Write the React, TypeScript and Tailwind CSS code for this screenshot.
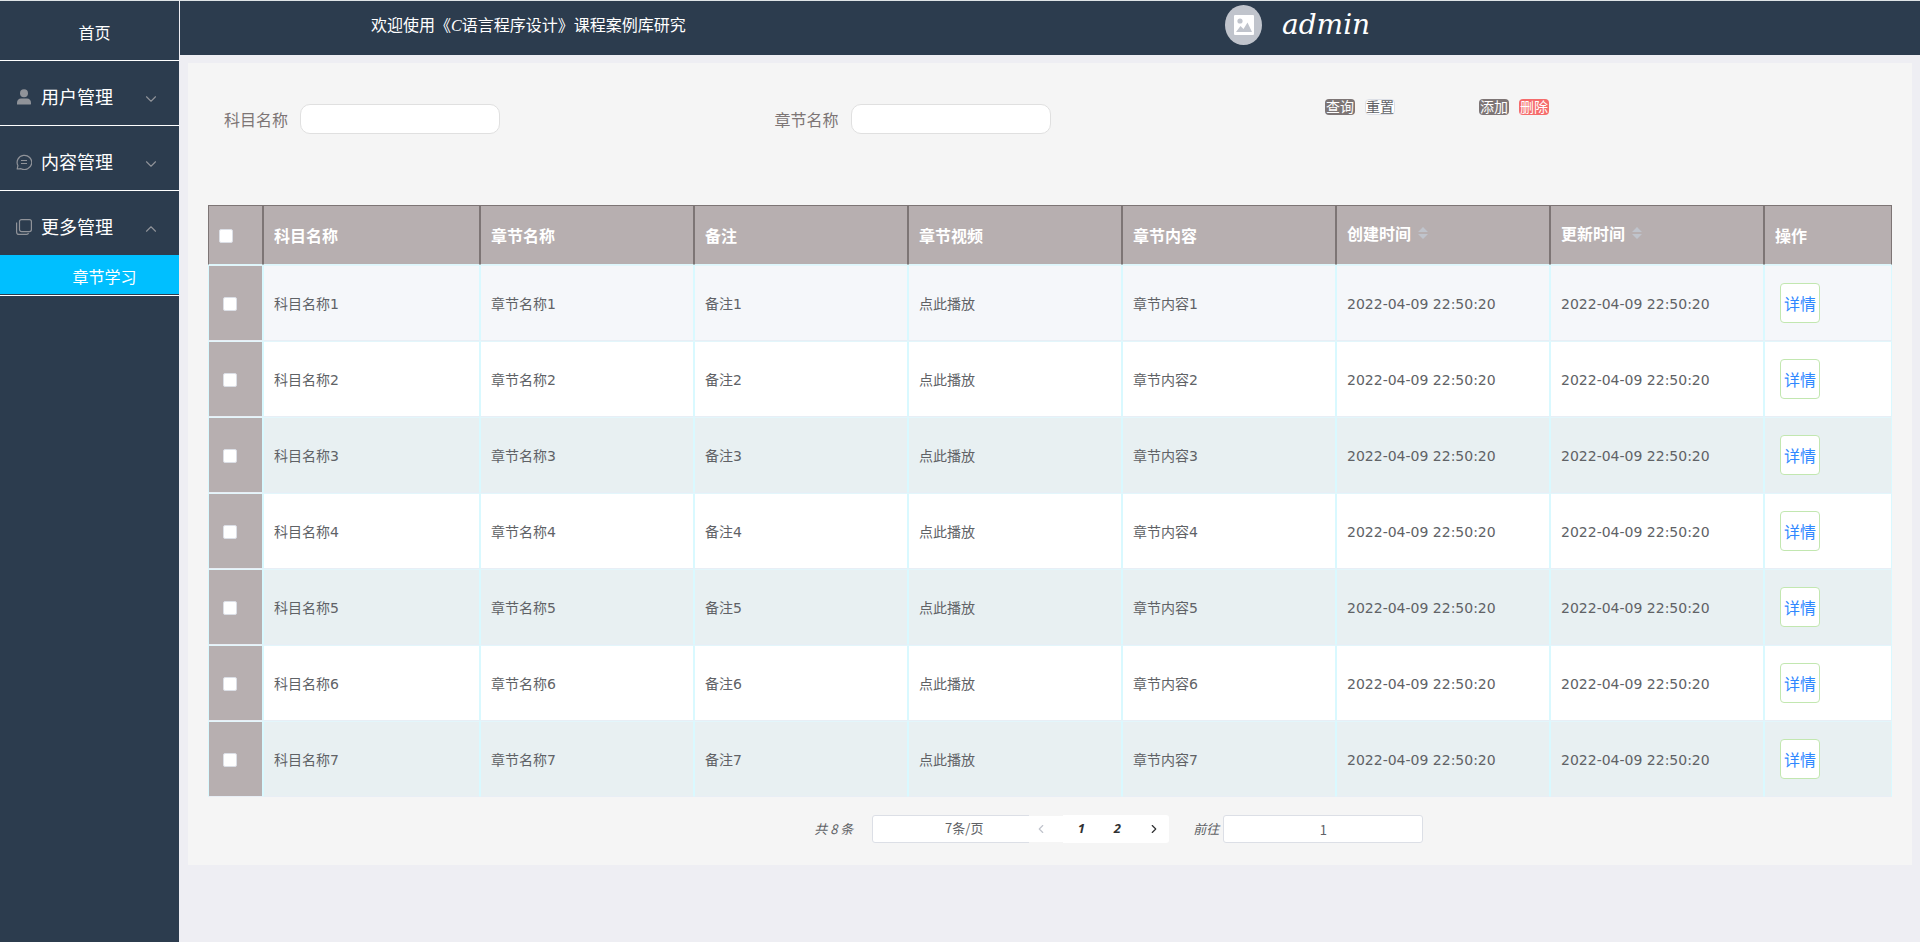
import { useState } from 'react';
import { ChevronDown, ChevronLeft, ChevronRight, ChevronUp } from 'lucide-react';

interface Chapter {
  id: number;
  subject: string;
  name: string;
  remark: string;
  content: string;
  createdAt: string;
  updatedAt: string;
}

const chapters: Chapter[] = [1, 2, 3, 4, 5, 6, 7].map((n) => ({
  id: n,
  subject: `科目名称${n}`,
  name: `章节名称${n}`,
  remark: `备注${n}`,
  content: `章节内容${n}`,
  createdAt: '2022-04-09 22:50:20',
  updatedAt: '2022-04-09 22:50:20',
}));

const columns = [
  { title: '科目名称' },
  { title: '章节名称' },
  { title: '备注' },
  { title: '章节视频' },
  { title: '章节内容' },
  { title: '创建时间', sortable: true },
  { title: '更新时间', sortable: true },
  { title: '操作' },
];

const UserIcon = () => (
  <svg viewBox="0 0 16 16" className="h-4 w-4 shrink-0" fill="#909399">
    <circle cx="8" cy="4.2" r="4" />
    <path d="M1 15.5v-1.800C1 11.300 2.600 9.600 5 9.600h6c2.400 0 4 1.700 4 4.100v1.300c0 .300-.200.500-.500.500z" />
  </svg>
);

const ChatIcon = () => (
  <svg viewBox="0 0 16 16" className="h-4 w-4 shrink-0" fill="none" stroke="#909399" strokeWidth="1.2">
    <path d="M1.200 15l.700-3.400A7.300 7.100 0 1 1 5 14.700z" strokeLinejoin="round" />
    <path d="M5 6.500h6M5 9.500h6" />
  </svg>
);

const CopyIcon = () => (
  <svg viewBox="0 0 16 16" className="h-4 w-4 shrink-0" fill="none" stroke="#909399" strokeWidth="1.2">
    <rect x="3.500" y="0.600" width="11.900" height="12" rx="2" />
    <path d="M.600 3.500v9.400a2.500 2.500 0 0 0 2.500 2.500h7.400a2 2 0 0 0 2-1.500" />
  </svg>
);

const PictureIcon = () => (
  <svg viewBox="0 0 20 20" className="h-5 w-5">
    <rect width="20" height="20" rx="1" fill="#fff" />
    <circle cx="6" cy="6" r="2.600" fill="#c0c4cc" />
    <path d="M2 17l4.500-6 3 3 4-6.500L18 17z" fill="#c0c4cc" />
  </svg>
);

const menus = [
  { title: '用户管理', icon: <UserIcon />, open: false },
  { title: '内容管理', icon: <ChatIcon />, open: false },
  { title: '更多管理', icon: <CopyIcon />, open: true },
];

function Sidebar() {
  return (
    <nav className="flex w-[180px] shrink-0 flex-col border-t border-r border-[#dfe4e6] border-r-[#eeeef3] bg-[#2c3c4e] text-white">
      <a href="#home" className="flex h-[60px] items-center justify-center border-b border-white pt-[2px] pl-[10px] text-base">
        首页
      </a>
      {menus.map((menu) => (
        <div key={menu.title} className="border-b border-white">
          <button className="flex h-16 w-full items-center pt-2 pr-[19px] pl-4">
            {menu.icon}
            <span className="ml-[9px] flex-1 pb-[2px] text-left text-lg">{menu.title}</span>
            {menu.open ? (
              <ChevronUp size={18} strokeWidth={1.5} className="mt-1 text-[#909399]" />
            ) : (
              <ChevronDown size={18} strokeWidth={1.5} className="mt-1 text-[#909399]" />
            )}
          </button>
          {menu.open && (
            <a
              href="#chapter"
              className="mb-px flex h-[39px] items-center justify-center bg-[#00bfff] pt-[2px] pl-[30px] text-base"
            >
              章节学习
            </a>
          )}
        </div>
      ))}
    </nav>
  );
}

function Header() {
  return (
    <header className="grid h-[55px] grid-cols-[3fr_2fr] border-t border-[#dfe4e6] bg-[#2c3c4e] text-white">
      <h1 className="pt-[13px] pl-[191px] font-['Liberation_Serif','Noto_Sans_CJK_SC',serif] text-base leading-6">
        欢迎使用《<i>C</i>语言程序设计》课程案例库研究
      </h1>
      <div className="flex items-start gap-5 pt-1 pl-px">
        <span className="flex h-10 w-[37px] items-center justify-center rounded-[50%] bg-[#c0c4cc]">
          <PictureIcon />
        </span>
        <span className="font-['DejaVu_Serif','Liberation_Serif',serif] text-[28px] leading-10 italic">admin</span>
      </div>
    </header>
  );
}

function SearchForm() {
  const fieldClass = 'h-[30px] w-[200px] rounded-[10px] border border-[#e0e0e0] bg-white px-3 text-sm outline-none';
  const buttonClass = 'flex h-4 w-[30px] items-center justify-center rounded-[4px] pb-[2px] text-sm leading-4';

  return (
    <form
      className="mb-[71px] grid grid-cols-[4fr_4fr_154px_3fr] pl-4 text-[#7d7575]"
      onSubmit={(e) => e.preventDefault()}
    >
      <div className="flex items-center gap-3 pt-[5px]">
        <label htmlFor="subject">科目名称</label>
        <input id="subject" type="text" className={fieldClass} />
      </div>
      <div className="flex items-center gap-3 pt-[5px]">
        <label htmlFor="chapter">章节名称</label>
        <input id="chapter" type="text" className={fieldClass} />
      </div>
      <div className="flex items-start gap-[10px]">
        <button type="submit" className={`${buttonClass} bg-[#7d7575] text-white`}>
          查询
        </button>
        <button type="reset" className={`${buttonClass} border border-[#dcdfe6] bg-white text-[#606266]`}>
          重置
        </button>
      </div>
      <div className="flex items-start gap-[10px]">
        <button type="button" className={`${buttonClass} bg-[#7d7575] text-white`}>
          添加
        </button>
        <button type="button" className={`${buttonClass} bg-[#f56c6c] text-white`}>
          删除
        </button>
      </div>
    </form>
  );
}

function SortCaret() {
  return (
    <svg viewBox="0 0 10 12" className="h-3 w-[10px]" fill="#c0c4cc">
      <path d="M0 5l5-5 5 5zM0 7l5 5 5-5z" />
    </svg>
  );
}

const rowColor = (id: number) => {
  if (id === 1) return 'bg-[#f5f7fa]';
  return id % 2 === 0 ? 'bg-white' : 'bg-[#e8f0f2]';
};

function ChapterTable() {
  const [selected, setSelected] = useState<number[]>([]);

  const toggle = (id: number) => {
    setSelected((prev) => (prev.includes(id) ? prev.filter((x) => x !== id) : [...prev, id]));
  };

  const toggleAll = () => {
    setSelected(selected.length === chapters.length ? [] : chapters.map((c) => c.id));
  };

  const checkClass =
    'block h-[14px] w-[14px] appearance-none rounded-[2px] border border-[#dcdfe6] bg-white checked:bg-[#409eff]';
  const headClass = 'border border-[#7d7575] border-b-[#ddf7fc] pl-[10px] text-left';
  const cellClass = 'border border-[#d9f9ff] border-t-[#e3f6fb] border-b-[#e8eef5] pt-[2px] pl-[10px]';

  return (
    <table className="w-full table-fixed border-separate border-spacing-0">
      <colgroup>
        <col className="w-[55px]" />
        <col className="w-[217px]" />
        <col span={6} />
        <col className="w-[128px]" />
      </colgroup>
      <thead>
        <tr className="h-[60px] bg-[#b7afb0] text-base text-white">
          <th className={`${headClass} pt-[2px]`}>
            <input
              type="checkbox"
              aria-label="全选"
              className={checkClass}
              checked={selected.length === chapters.length}
              onChange={toggleAll}
            />
          </th>
          {columns.map((col) => (
            <th key={col.title} className={headClass}>
              {col.sortable ? (
                <button className="flex items-center gap-[7px] pb-1 font-bold">
                  {col.title}
                  <SortCaret />
                </button>
              ) : (
                col.title
              )}
            </th>
          ))}
        </tr>
      </thead>
      <tbody className="font-['DejaVu_Sans','Noto_Sans_CJK_SC',sans-serif] text-sm text-[#606266]">
        {chapters.map((c) => (
          <tr key={c.id} className={`h-[76px] ${rowColor(c.id)}`}>
            <td className="border border-[#d9f9ff] border-t-[#e3f6fb] border-b-[#e8eef5] bg-[#b7afb0] pt-[2px] pl-[14px]">
              <input
                type="checkbox"
                aria-label={c.name}
                className={checkClass}
                checked={selected.includes(c.id)}
                onChange={() => toggle(c.id)}
              />
            </td>
            <td className={cellClass}>{c.subject}</td>
            <td className={cellClass}>{c.name}</td>
            <td className={cellClass}>{c.remark}</td>
            <td className={cellClass}>点此播放</td>
            <td className={cellClass}>{c.content}</td>
            <td className={cellClass}>{c.createdAt}</td>
            <td className={cellClass}>{c.updatedAt}</td>
            <td className="border border-[#d9f9ff] border-t-[#e3f6fb] border-b-[#e8eef5] pl-[15px]">
              <button className="flex h-10 w-10 items-center justify-center rounded-[4px] border border-[#c2e7b0] bg-white pt-[3px] text-base text-[#2f88ff]">
                详情
              </button>
            </td>
          </tr>
        ))}
      </tbody>
    </table>
  );
}

function Pagination() {
  const [page, setPage] = useState(1);

  return (
    <div className="mt-[18px] flex h-7 items-center pl-[36%] text-[13px] text-[#606266]">
      <span className="w-[58px] text-[13px] italic">共 8 条</span>
      <select
        aria-label="每页条数"
        className="mr-[-43px] h-7 w-[200px] appearance-none rounded-[3px] border border-[#dcdfe6] bg-white pr-4 pb-[2px] text-center"
      >
        <option>7条/页</option>
      </select>
      <button
        aria-label="上一页"
        className="z-10 flex h-7 w-[34px] items-center border-y border-[#f5f5f5] bg-white pl-[5px] text-[#c0c4cc]"
        onClick={() => setPage(1)}
      >
        <ChevronLeft size={14} />
      </button>
      {[1, 2].map((n) => (
        <button
          key={n}
          className="z-10 h-7 w-9 bg-white font-['Open_Sans','Noto_Sans',sans-serif] font-bold text-[#303133] italic"
          onClick={() => setPage(n)}
        >
          {n}
        </button>
      ))}
      <button
        aria-label="下一页"
        className="z-10 flex h-7 w-[34px] items-center justify-center rounded-r-[3px] bg-white pl-1 text-[#303133]"
        onClick={() => setPage(2)}
      >
        <ChevronRight size={14} />
      </button>
      <label htmlFor="page" className="ml-6 w-[30px] text-[13px] italic">
        前往
      </label>
      <input
        id="page"
        type="text"
        value={page}
        onChange={(e) => setPage(Number(e.target.value) || 1)}
        className="h-7 w-[200px] rounded-[3px] border border-[#dcdfe6] bg-white text-center"
      />
    </div>
  );
}

function App() {
  return (
    <div className="flex min-h-screen bg-[#eeeef3] font-['Noto_Sans_CJK_SC',sans-serif]">
      <Sidebar />
      <div className="min-w-0 flex-1">
        <Header />
        <main className="m-2 bg-[#f5f5f5] px-5 pt-9 pb-[22px]">
          <SearchForm />
          <ChapterTable />
          <Pagination />
        </main>
      </div>
    </div>
  );
}

export default App;
